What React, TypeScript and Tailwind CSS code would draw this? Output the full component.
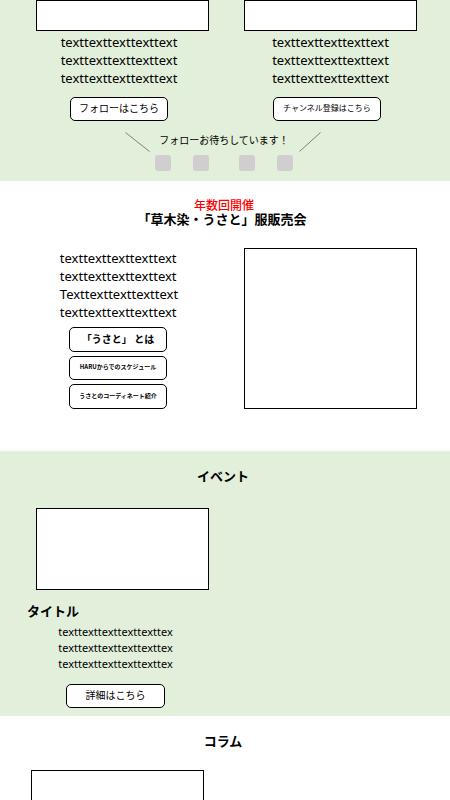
import type { ReactNode } from "react";

const latin = "font-['Noto_Sans','Noto_Sans_CJK_JP',sans-serif]";

function Pill({ className, children }: { className: string; children: ReactNode }) {
  return (
    <button
      type="button"
      className={`block rounded-[5px] border border-black bg-white pb-[3px] text-center whitespace-nowrap ${className}`}
    >
      {children}
    </button>
  );
}

function Lines({ lines, className }: { lines: string[]; className: string }) {
  return (
    <p className={`${latin} whitespace-nowrap ${className}`}>
      {lines.map((line, i) => (
        <span key={i} className="block">
          {line}
        </span>
      ))}
    </p>
  );
}

const line = "texttexttexttexttext";

function Dot({ label }: { label: string }) {
  return <a href="#" aria-label={label} className="block size-4 rounded-[3px] bg-[#d0cece]" />;
}

function Follow() {
  return (
    <section className="bg-[#e2efda] pb-[10px]">
      <div className="grid grid-cols-2 gap-[35px] pr-[33px] pl-9">
        <div>
          <div className="h-[31px] border border-black bg-white" />
          <div className="mr-[7px] flex flex-col items-center pt-[2px]">
            <Lines lines={[line, line, line]} className="text-[13px] leading-[18px]" />
            <Pill className="mt-[10px] h-6 w-[98px] text-[10px]">フォローはこちら</Pill>
          </div>
        </div>
        <div>
          <div className="h-[31px] border border-black bg-white" />
          <div className="flex flex-col items-center pt-[2px]">
            <Lines lines={[line, line, line]} className="text-[13px] leading-[18px]" />
            <Pill className="mt-[10px] mr-[7px] h-6 w-[108px] text-[8px]">チャンネル登録はこちら</Pill>
          </div>
        </div>
      </div>
      <div className="mt-[11px] flex items-start justify-center pr-1">
        <svg width="25" height="20" viewBox="0 0 25 20" aria-hidden="true">
          <path d="M0.5 0.5 24.5 19.5" stroke="#7f7f7f" fill="none" />
        </svg>
        <p className="mr-[10px] ml-[9px] text-[10px] leading-4 whitespace-nowrap">
          フォローお待ちしています！
        </p>
        <svg width="22" height="20" viewBox="0 0 22 20" aria-hidden="true">
          <path d="M21.5 0.5 0.5 19.5" stroke="#7f7f7f" fill="none" />
        </svg>
      </div>
      <div className="mt-[3px] flex justify-center gap-[30px] pr-[2px]">
        <div className="flex gap-[22px]">
          <Dot label="SNS 1" />
          <Dot label="SNS 2" />
        </div>
        <div className="flex gap-[22px]">
          <Dot label="SNS 3" />
          <Dot label="SNS 4" />
        </div>
      </div>
    </section>
  );
}

function Sale() {
  return (
    <section className="bg-white pt-[17px] pb-[42px]">
      <h2 className="pr-[2px] text-center text-[13px] leading-[14px]">
        <span className="block text-[12px] font-medium text-[#ff0000]">年数回開催</span>
        <span className="block pr-1 font-bold">「草木染・うさと」服販売会</span>
      </h2>
      <div className="mt-[22px] grid grid-cols-2 gap-[35px] pr-[33px] pl-9">
        <div className="mr-[7px] flex flex-col items-center pt-px">
          <Lines
            lines={[line, line, "Texttexttexttexttext", line]}
            className="text-[13px] leading-[18px]"
          />
          <div className="mt-[6px] mr-[2px] flex flex-col gap-1">
            <Pill className="h-[25px] w-[98px] text-[10px] font-bold">「うさと」 とは</Pill>
            <Pill className="h-6 w-[98px] text-[6px] font-bold">HARUからでのスケジュール</Pill>
            <Pill className="h-[25px] w-[98px] text-[6px] font-bold">うさとのコーディネート紹介</Pill>
          </div>
        </div>
        <div className="h-[161px] border border-black bg-white" />
      </div>
    </section>
  );
}

function Events() {
  const text = "texttexttexttexttexttex";
  return (
    <section className="bg-[#e2efda] pt-[15px] pb-2">
      <h2 className="pr-1 text-center text-[13px] leading-5 font-bold">イベント</h2>
      <div className="mt-[22px] grid grid-cols-2 gap-[35px] pr-[33px] pl-9">
        <article>
          <div className="h-[82px] border border-black bg-white" />
          <h3 className="mt-[11px] -ml-[9px] text-[13px] leading-5 font-bold">タイトル</h3>
          <div className="mr-[14px] flex flex-col items-center pt-[3px]">
            <Lines lines={[text, text, text]} className="text-[11px] leading-4" />
            <Pill className="mt-3 h-6 w-[99px] text-[10px]">詳細はこちら</Pill>
          </div>
        </article>
      </div>
    </section>
  );
}

function Columns() {
  return (
    <section className="bg-white pt-[15px]">
      <h2 className="pr-1 text-center text-[13px] leading-5 font-bold">コラム</h2>
      <div className="mt-[19px] grid grid-cols-2 gap-[35px] pr-[38px] pl-[31px]">
        <div className="h-[30px] border border-b-0 border-black bg-white" />
      </div>
    </section>
  );
}

export default function App() {
  return (
    <main
      lang="ja"
      className="bg-white font-['Noto_Sans_CJK_JP',sans-serif] text-black"
    >
      <Follow />
      <Sale />
      <Events />
      <Columns />
    </main>
  );
}
